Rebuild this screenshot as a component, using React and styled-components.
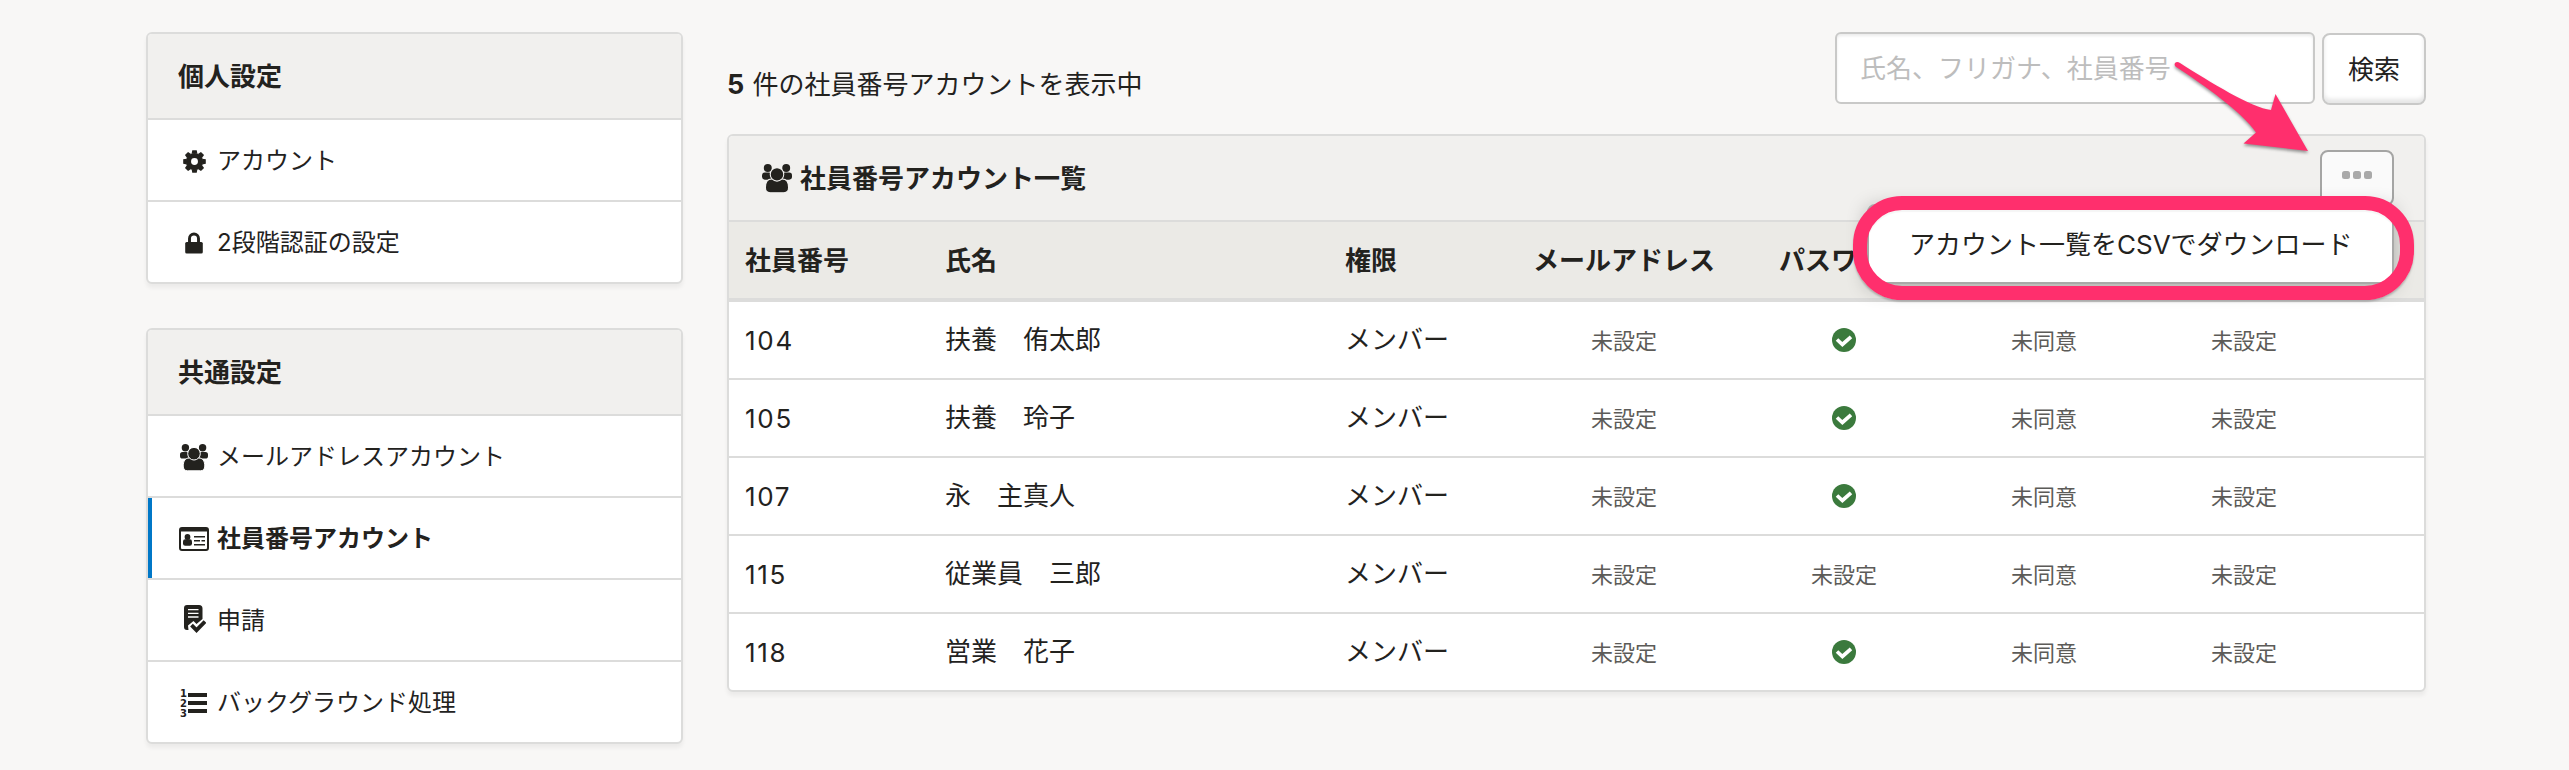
import React from "react";
import styled, { createGlobalStyle, css } from "styled-components";

const GlobalStyle = createGlobalStyle`
  * { box-sizing: border-box; }
  body {
    margin: 0;
    background: #f8f7f6;
    color: #23221e;
    font-family: Inter, "Noto Sans CJK JP", sans-serif;
    font-size: 26px;
    line-height: 38px;
  }
`;

const Page = styled.div`
  position: relative;
  display: flex;
  gap: 44px;
  align-items: flex-start;
  width: 2569px;
  height: 770px;
  padding: 32px 143px 0 146px;
  overflow: hidden;
`;

const Sidebar = styled.aside`
  display: flex;
  flex-direction: column;
  gap: 44px;
  width: 537px;
`;

const Panel = styled.section`
  background: #fff;
  border: 2px solid #dcdcdb;
  border-radius: 6px;
  box-shadow: 0 4px 4px rgba(0, 0, 0, 0.05);
`;

const PanelHeader = styled.header`
  display: flex;
  align-items: center;
  height: 86px;
  padding: 1px 30px 0;
  background: #f1f0ee;
  border-bottom: 2px solid #dcdcdb;
  border-radius: 4px 4px 0 0;
  font-weight: 700;
`;

const MenuItem = styled.a`
  display: flex;
  align-items: center;
  height: ${(p) => (p.$last ? 80 : 82)}px;
  padding: 2px 0 0 30px;
  font-size: 24px;
  border-bottom: ${(p) => (p.$last ? "none" : "2px solid #dcdcdb")};
  border-radius: ${(p) => (p.$last ? "0 0 4px 4px" : "0")};
  ${(p) =>
    p.$active &&
    css`
      font-weight: 700;
      box-shadow: inset 4px 0 0 #0077c7;
    `}
`;

const IconSlot = styled.span`
  display: flex;
  align-items: center;
  justify-content: center;
  width: 32px;
  margin-right: 7px;
`;

const Main = styled.main`
  display: flex;
  flex-direction: column;
  width: 1699px;
`;

const Toolbar = styled.div`
  display: flex;
  justify-content: space-between;
  height: 102px;
`;

const Count = styled.p`
  margin: 0;
  padding-top: 34px;
`;

const CountNumber = styled.b`
  margin-right: 1px;
  font-size: 27px;
`;

const Search = styled.form`
  display: flex;
  gap: 7px;
`;

const SearchInput = styled.input`
  width: 480px;
  height: 72px;
  padding: 1px 24px 0 23px;
  font: inherit;
  background: #fff;
  border: 2px solid #c9c9c8;
  border-radius: 6px;
  box-shadow: inset 0 2px 3px rgba(0, 0, 0, 0.08);
  &::placeholder { color: #bdbdbd; opacity: 1; }
`;

const SearchButton = styled.button`
  width: 104px;
  height: 72px;
  margin-top: 1px;
  padding: 1px 0 0;
  font: inherit;
  color: inherit;
  background: #fff;
  border: 2px solid #c9c9c8;
  border-radius: 8px;
  box-shadow: inset 0 -4px 4px rgba(0, 0, 0, 0.1);
`;

const TitleIcon = styled.span`
  display: flex;
  margin: 0 8px 0 3px;
`;

const Title = styled.span`
  flex: 1;
`;

const MoreButton = styled.button`
  display: flex;
  align-items: flex-start;
  justify-content: center;
  gap: 3px;
  width: 74px;
  height: 56px;
  margin-top: -1px;
  padding: 19px 0 0;
  background: #fafafa;
  border: 2px solid #a5a5a4;
  border-radius: 8px;
`;

const Dot = styled.i`
  width: 8px;
  height: 8px;
  border-radius: 2.5px;
  background: #a9a9a9;
`;

const grid = css`
  display: grid;
  grid-template-columns: 200px 400px 175px 240px 200px 200px 200px 80px;
  align-items: center;
`;

const HeadRow = styled.div`
  ${grid}
  height: 80px;
  padding-top: 1px;
  background: #ebeae6;
  border-bottom: 4px solid #dcdcdb;
  font-weight: 700;
`;

const Row = styled.div`
  ${grid}
  height: 78px;
  border-bottom: 2px solid #dcdcdb;
  &:last-child { height: 76px; border-bottom: none; }
`;

const Cell = styled.div`
  padding-left: 16px;
`;

const NumberCell = styled(Cell)`
  padding-top: 2px;
  letter-spacing: 1.7px;
`;

const CenterCell = styled.div`
  display: flex;
  justify-content: center;
`;

const Muted = styled.span`
  font-size: 22px;
  color: #5c5b58;
  padding-top: 2px;
`;

const Dropdown = styled.div`
  position: absolute;
  left: 1867px;
  top: 204px;
  width: 527px;
  height: 80px;
  padding-left: 40px;
  line-height: 78px;
  background: #fff;
  border: 2px solid #a9a9a8;
  border-radius: 8px;
  white-space: nowrap;
  box-shadow: 0 4px 20px rgba(0, 0, 0, 0.3);
`;

const Highlight = styled.div`
  position: absolute;
  left: 1853px;
  top: 196px;
  width: 561px;
  height: 104px;
  border: 14px solid #ff2f6d;
  border-radius: 49px;
  box-shadow: 0 2px 2px rgba(0, 0, 0, 0.2), inset 0 2px 1px rgba(0, 0, 0, 0.04);
`;

const Arrow = styled.svg`
  position: absolute;
  left: 2160px;
  top: 50px;
  filter: drop-shadow(0 2px 1.5px rgba(0, 0, 0, 0.4));
`;

const Members = ({ size, gap = "#fff" }) => (
  <svg width={size} height={(size * 27) / 28} viewBox="0 0 28 27" fill="#23221e">
    <circle cx="5.4" cy="3.8" r="3.7" />
    <circle cx="22.6" cy="3.8" r="3.7" />
    <rect x="0" y="8" width="9" height="6.6" rx="2.6" />
    <rect x="19" y="8" width="9" height="6.600" rx="2.6" />
    <g stroke={gap} strokeWidth="1">
      <path d="M9 14C5.500 14 3.200 17 3.200 22c0 3 1.500 4.800 4.300 4.800h13c2.800 0 4.300-1.800 4.300-4.800 0-5-2.300-8-5.800-8z" />
      <circle cx="14" cy="9.700" r="6.300" />
    </g>
  </svg>
);

const Gear = () => (
  <svg width="23" height="23" viewBox="-12 -12 24 24">
    <circle r="6.300" fill="none" stroke="#23221e" strokeWidth="5.400" />
    {[0, 45, 90, 135, 180, 225, 270, 315].map((angle) => (
      <path key={angle} d="M-3-8L-2.300-11.800H2.300L3-8z" fill="#23221e" transform={`rotate(${angle})`} />
    ))}
  </svg>
);

const Lock = () => (
  <svg width="18" height="22" viewBox="0 0 18 22">
    <path d="M4.500 11V6.500a4.500 4.500 0 0 1 9 0V11" fill="none" stroke="#23221e" strokeWidth="2.900" />
    <rect x="0.200" y="10" width="17.600" height="11.500" rx="1.500" fill="#23221e" />
  </svg>
);

const Done = () => (
  <svg width="24" height="24" viewBox="0 0 24 24">
    <circle cx="12" cy="12" r="12" fill="#3b7a3d" />
    <path d="M5 11.500l5.400 5L19 8.800" fill="none" stroke="#fff" strokeWidth="3.700" />
  </svg>
);

const IdCard = () => (
  <svg width="30" height="24" viewBox="0 0 30 24" fill="#23221e">
    <rect x="1" y="1" width="28" height="22" rx="2" fill="none" stroke="#23221e" strokeWidth="2" />
    <path d="M1 2h28v2.500H1z" />
    <circle cx="8.500" cy="10" r="2.900" />
    <rect x="4" y="12.300" width="9" height="6.400" rx="2.200" />
    <path d="M15 9h11v1.500H15zM15 13h6v1.500h-6zM22.500 13H26v1.500h-3.500zM15 17h11v1.500H15z" />
  </svg>
);

const Approval = () => (
  <svg width="24" height="32" viewBox="-1 0 24 32">
    <path d="M4 0h12q3.500 0 3.500 3.500V14l-6 5-3-3L5 20.500 5.500 25H4Q1 25 1 22V3Q1 0 4 0z" fill="#23221e" />
    <path d="M5 4.700h10.500M5 8.400h10.500M5 12h10.500" stroke="#fff" strokeWidth="1.300" />
    <path d="M9 20l4.700 5.500L22 17" fill="none" stroke="#fff" strokeWidth="6.500" />
    <path d="M8.500 20.200l5 5L22 16.500" fill="none" stroke="#23221e" strokeWidth="3.800" />
  </svg>
);

const Digit = styled.text`
  font: 700 10px "DejaVu Sans", sans-serif;
  fill: #23221e;
`;

const NumberedList = () => (
  <svg width="28" height="28" viewBox="0 0 28 28" fill="#23221e">
    <Digit x="0" y="8">1</Digit>
    <Digit x="0" y="17.500">2</Digit>
    <Digit x="0" y="27.500">3</Digit>
    <path d="M8 4h19v4H8zM8 12h19v4H8zM8 20h19v4H8z" />
  </svg>
);

const personal = [
  { label: "アカウント", icon: <Gear /> },
  { label: "2段階認証の設定", icon: <Lock /> },
];

const common = [
  { label: "メールアドレスアカウント", icon: <Members size={28} /> },
  { label: "社員番号アカウント", icon: <IdCard />, active: true },
  { label: "申請", icon: <Approval /> },
  { label: "バックグラウンド処理", icon: <NumberedList /> },
];

const members = [
  ["104", "扶養　侑太郎", true],
  ["105", "扶養　玲子", true],
  ["107", "永　主真人", true],
  ["115", "従業員　三郎", false],
  ["118", "営業　花子", true],
];

const SettingsPanel = ({ title, items }) => (
  <Panel>
    <PanelHeader>{title}</PanelHeader>
    {items.map((item, i) => (
      <MenuItem key={item.label} $active={item.active} $last={i === items.length - 1}>
        <IconSlot>{item.icon}</IconSlot>
        {item.label}
      </MenuItem>
    ))}
  </Panel>
);

export default function App() {
  return (
    <Page>
      <GlobalStyle />
      <Sidebar>
        <SettingsPanel title="個人設定" items={personal} />
        <SettingsPanel title="共通設定" items={common} />
      </Sidebar>
      <Main>
        <Toolbar>
          <Count>
            <CountNumber>5</CountNumber> 件の社員番号アカウントを表示中
          </Count>
          <Search>
            <SearchInput placeholder="氏名、フリガナ、社員番号" />
            <SearchButton type="button">検索</SearchButton>
          </Search>
        </Toolbar>
        <Panel>
          <PanelHeader>
            <TitleIcon>
              <Members size={30} gap="#f1f0ee" />
            </TitleIcon>
            <Title>社員番号アカウント一覧</Title>
            <MoreButton>
              <Dot />
              <Dot />
              <Dot />
            </MoreButton>
          </PanelHeader>
          <HeadRow>
            <Cell>社員番号</Cell>
            <Cell>氏名</Cell>
            <Cell>権限</Cell>
            <CenterCell>メールアドレス</CenterCell>
            <CenterCell>パスワード</CenterCell>
          </HeadRow>
          {members.map(([number, name, hasPassword]) => (
            <Row key={number}>
              <NumberCell>{number}</NumberCell>
              <Cell>{name}</Cell>
              <Cell>メンバー</Cell>
              <CenterCell><Muted>未設定</Muted></CenterCell>
              <CenterCell>{hasPassword ? <Done /> : <Muted>未設定</Muted>}</CenterCell>
              <CenterCell><Muted>未同意</Muted></CenterCell>
              <CenterCell><Muted>未設定</Muted></CenterCell>
            </Row>
          ))}
        </Panel>
      </Main>
      <Dropdown>アカウント一覧をCSVでダウンロード</Dropdown>
      <Highlight />
      <Arrow width="160" height="150" viewBox="0 0 160 150">
        <path
          d="M15 13Q17 11 20 13C50 32 92 58 111 60L115.500 44 148 101 83.500 93.500 96 82.500C82 62 45 36 15.500 16.500Q14 15 15 13z"
          fill="#ff2f6d"
        />
      </Arrow>
    </Page>
  );
}
